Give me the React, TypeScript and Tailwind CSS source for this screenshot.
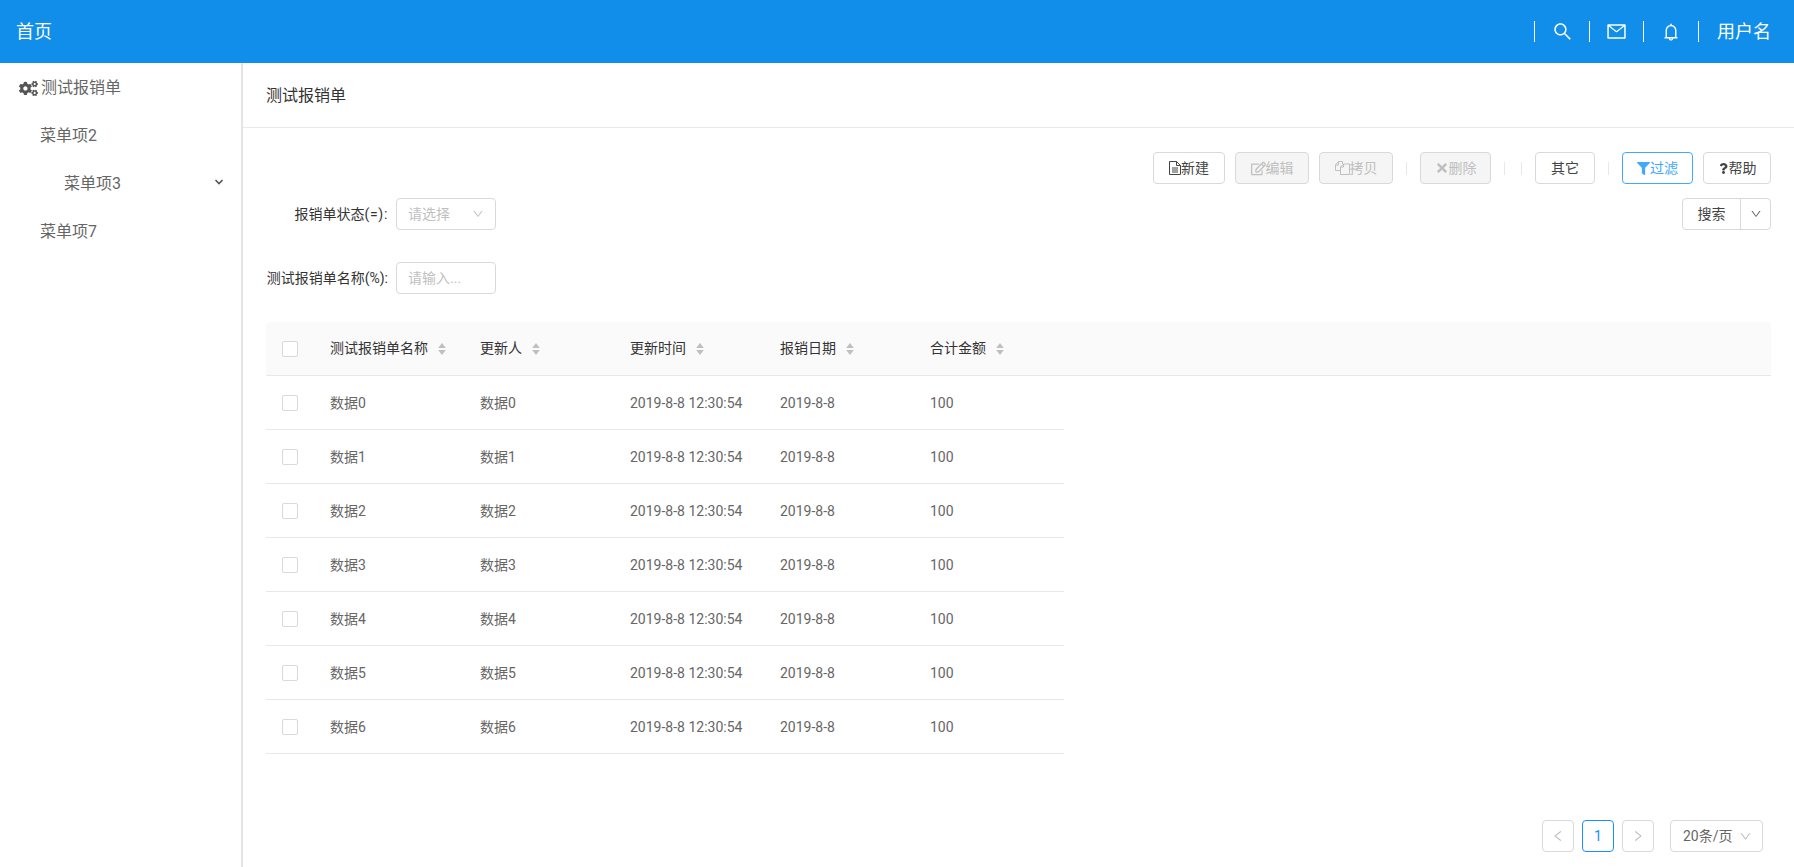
import type { ReactNode } from "react";
import { FaCogs, FaFilter, FaQuestion, FaRegEdit, FaTimes } from "react-icons/fa";
import {
  AiOutlineBell,
  AiOutlineDown,
  AiOutlineLeft,
  AiOutlineMail,
  AiOutlineRight,
  AiOutlineSearch,
} from "react-icons/ai";

const font = "font-['Roboto','Noto_Sans_CJK_SC',sans-serif]";
const columns = ["测试报销单名称", "更新人", "更新时间", "报销日期", "合计金额"];
const rows = [0, 1, 2, 3, 4, 5, 6];

function SortIcon() {
  return (
    <svg width="8" height="14" viewBox="0 0 8 14" className="ml-[10px] mt-[1px] fill-[#bfbfbf]">
      <path d="M4 1l3.8 5H.2z" />
      <path d="M4 13L.2 8h7.6z" />
    </svg>
  );
}

// 新建按钮的文档图标
function FileIcon() {
  return (
    <svg width="12" height="14" viewBox="0 0 12 14" fill="none" stroke="currentColor" strokeWidth="1">
      <path d="M.5.5h7l4 4v9H.5z" />
      <path d="M7.5.5v4h4M3 7h6M3 9h6M3 11h6" />
    </svg>
  );
}

// 拷贝按钮的双层文档图标
function CopyIcon() {
  return (
    <svg width="15" height="14" viewBox="0 0 15 14" fill="none" stroke="currentColor" strokeWidth="1">
      <path d="M5.5 9.5h-5V4l3-3.5h4v2.5" />
      <path d="M3.5.5V4h-3" />
      <path d="M5.5 13.5V6l3-3h6v10.5z" />
      <path d="M8.5 3v3h-3" />
    </svg>
  );
}

function Checkbox() {
  return (
    <div className="w-[48px] pl-[16px] shrink-0">
      <div className="w-[16px] h-[16px] rounded-[2px] border border-[#d9d9d9] bg-white" />
    </div>
  );
}

function Sep({ className }: { className: string }) {
  return <div className={`w-px h-[13px] bg-[#e8e8e8] ${className}`} />;
}

function ToolButton({
  width,
  disabled,
  active,
  children,
}: {
  width: string;
  disabled?: boolean;
  active?: boolean;
  children: ReactNode;
}) {
  let color = "border-[#d9d9d9] bg-white text-[#444]";
  if (disabled) color = "border-[#d9d9d9] bg-[#f5f5f5] text-[#bfbfbf]";
  if (active) color = "border-[#40a9ff] bg-white text-[#40a9ff]";
  return (
    <button className={`${width} ${color} h-[32px] shrink-0 flex items-center justify-center border rounded-[4px] text-[14px]`}>
      {children}
    </button>
  );
}

function PageButton({ children, active }: { children: ReactNode; active?: boolean }) {
  return (
    <button
      className={`w-[32px] h-[32px] flex items-center justify-center rounded-[4px] border text-[14px] ${
        active ? "border-[#1890ff] text-[#1890ff]" : "border-[#d9d9d9] text-[#bfbfbf]"
      }`}
    >
      {children}
    </button>
  );
}

function HeaderCell({ width, children }: { width: string; children: ReactNode }) {
  return <div className={`${width} h-[21px] border-l border-white flex items-center justify-center`}>{children}</div>;
}

export default function App() {
  return (
    <div className={`${font} min-h-screen flex flex-col bg-white`}>
      {/* 顶部 */}
      <div className="h-[63px] bg-[#108ee9] text-white flex items-center justify-between pl-[16px] pr-[23px]">
        <span className="text-[18px]">首页</span>
        <div className="flex items-center">
          <HeaderCell width="w-[55px]">
            <AiOutlineSearch className="w-[21px] h-[21px]" />
          </HeaderCell>
          <HeaderCell width="w-[54px]">
            <AiOutlineMail className="w-[21px] h-[21px]" />
          </HeaderCell>
          <HeaderCell width="w-[55px]">
            <AiOutlineBell className="w-[20px] h-[20px]" />
          </HeaderCell>
          <div className="h-[21px] border-l border-white pl-[18px] flex items-center text-[18px]">用户名</div>
        </div>
      </div>

      <div className="flex flex-1">
        {/* 左侧菜单 */}
        <div className="w-[243px] shrink-0 border-r-2 border-[#e4e4e4] text-[16px] text-[#666]">
          <div className="h-[48px] pl-[19px] pt-[2px] flex items-center">
            <FaCogs className="w-[19px] h-[19px] mr-[3px] text-[#555]" />
            测试报销单
          </div>
          <div className="h-[48px] pl-[40px] pt-[2px] flex items-center">菜单项2</div>
          <div className="h-[48px] pl-[64px] pr-[17px] pt-[2px] flex items-center justify-between">
            菜单项3
            <svg width="10" height="6" viewBox="0 0 10 6" fill="none" stroke="#555" strokeWidth="1.6" className="-mt-[4px]">
              <path d="M1.5 1L5 4.5 8.5 1" />
            </svg>
          </div>
          <div className="h-[48px] pl-[40px] pt-[2px] flex items-center">菜单项7</div>
        </div>

        {/* 内容 */}
        <div className="flex-1 min-w-0">
          <div className="h-[65px] border-b border-[#e8e8e8] pl-[23px] pt-[2px] flex items-center text-[16px] text-[#333]">
            测试报销单
          </div>

          <div className="pl-[23px] pr-[23px] pt-[24px]">
            {/* 工具栏 */}
            <div className="flex items-center justify-end">
              <ToolButton width="w-[72px]">
                <FileIcon />
                新建
              </ToolButton>
              <div className="w-[10px]" />
              <ToolButton width="w-[74px]" disabled>
                <FaRegEdit className="w-[15px] h-[15px]" />
                编辑
              </ToolButton>
              <div className="w-[10px]" />
              <ToolButton width="w-[74px]" disabled>
                <CopyIcon />
                拷贝
              </ToolButton>
              <Sep className="mx-[13px]" />
              <ToolButton width="w-[71px]" disabled>
                <FaTimes className="w-[14px] h-[14px]" />
                删除
              </ToolButton>
              <Sep className="ml-[13px] mr-[16px]" />
              <Sep className="mr-[13px]" />
              <ToolButton width="w-[60px]">其它</ToolButton>
              <Sep className="mx-[13px]" />
              <ToolButton width="w-[71px]" active>
                <FaFilter className="w-[13px] h-[13px]" />
                过滤
              </ToolButton>
              <div className="w-[10px]" />
              <ToolButton width="w-[68px]">
                <FaQuestion className="w-[11px] h-[11px]" />
                帮助
              </ToolButton>
            </div>

            {/* 查询条件 */}
            <div className="mt-[14px] flex justify-between items-start">
              <div className="flex flex-col gap-[32px] text-[14px] text-[#333]">
                <div className="flex items-center">
                  <label className="w-[122px] text-right mr-[8px]">
                    报销单状态<span className="tracking-[0.7px]">(=):</span>
                  </label>
                  <div className="w-[100px] h-[32px] border border-[#d9d9d9] rounded-[4px] pl-[11px] pr-[11px] flex items-center justify-between text-[#bfbfbf]">
                    请选择
                    <AiOutlineDown className="w-[12px] h-[12px]" />
                  </div>
                </div>
                <div className="flex items-center">
                  <label className="w-[122px] text-right mr-[8px]">测试报销单名称(%):</label>
                  <div className="w-[100px] h-[32px] border border-[#d9d9d9] rounded-[4px] pl-[11px] flex items-center text-[#bfbfbf]">
                    请输入...
                  </div>
                </div>
              </div>
              <div className="flex h-[32px] text-[14px] text-[#444] border border-[#d9d9d9] rounded-[4px]">
                <div className="w-[58px] flex items-center justify-center border-r border-[#d9d9d9]">搜索</div>
                <div className="w-[29px] flex items-center justify-center text-[#666]">
                  <AiOutlineDown className="w-[12px] h-[12px]" />
                </div>
              </div>
            </div>

            {/* 表格 */}
            <div className="mt-[28px] text-[14px]">
              <div className="h-[54px] flex items-center bg-[#fafafa] border-b border-[#e8e8e8] rounded-t-[4px] text-[#333]">
                <Checkbox />
                {columns.map((c) => (
                  <div key={c} className="w-[150px] pl-[16px] shrink-0 flex items-center">
                    {c}
                    <SortIcon />
                  </div>
                ))}
              </div>
              {rows.map((i) => (
                <div key={i} className="w-[798px] h-[54px] flex items-center border-b border-[#e8e8e8] text-[#666]">
                  <Checkbox />
                  <div className="w-[150px] pl-[16px] pt-[2px] shrink-0">数据{i}</div>
                  <div className="w-[150px] pl-[16px] pt-[2px] shrink-0">数据{i}</div>
                  <div className="w-[150px] pl-[16px] pt-[2px] shrink-0">2019-8-8 12:30:54</div>
                  <div className="w-[150px] pl-[16px] pt-[2px] shrink-0">2019-8-8</div>
                  <div className="w-[150px] pl-[16px] pt-[2px] shrink-0">100</div>
                </div>
              ))}
            </div>

            {/* 分页 */}
            <div className="mt-[66px] pr-[8px] flex items-center justify-end gap-[8px]">
              <PageButton>
                <AiOutlineLeft className="w-[14px] h-[14px]" />
              </PageButton>
              <PageButton active>1</PageButton>
              <PageButton>
                <AiOutlineRight className="w-[14px] h-[14px]" />
              </PageButton>
              <div className="ml-[8px] w-[93px] h-[32px] border border-[#d9d9d9] rounded-[4px] pl-[12px] pr-[10px] flex items-center justify-between text-[14px] text-[#666]">
                20条/页
                <AiOutlineDown className="w-[13px] h-[13px] text-[#bfbfbf]" />
              </div>
            </div>
          </div>
        </div>
      </div>
    </div>
  );
}
